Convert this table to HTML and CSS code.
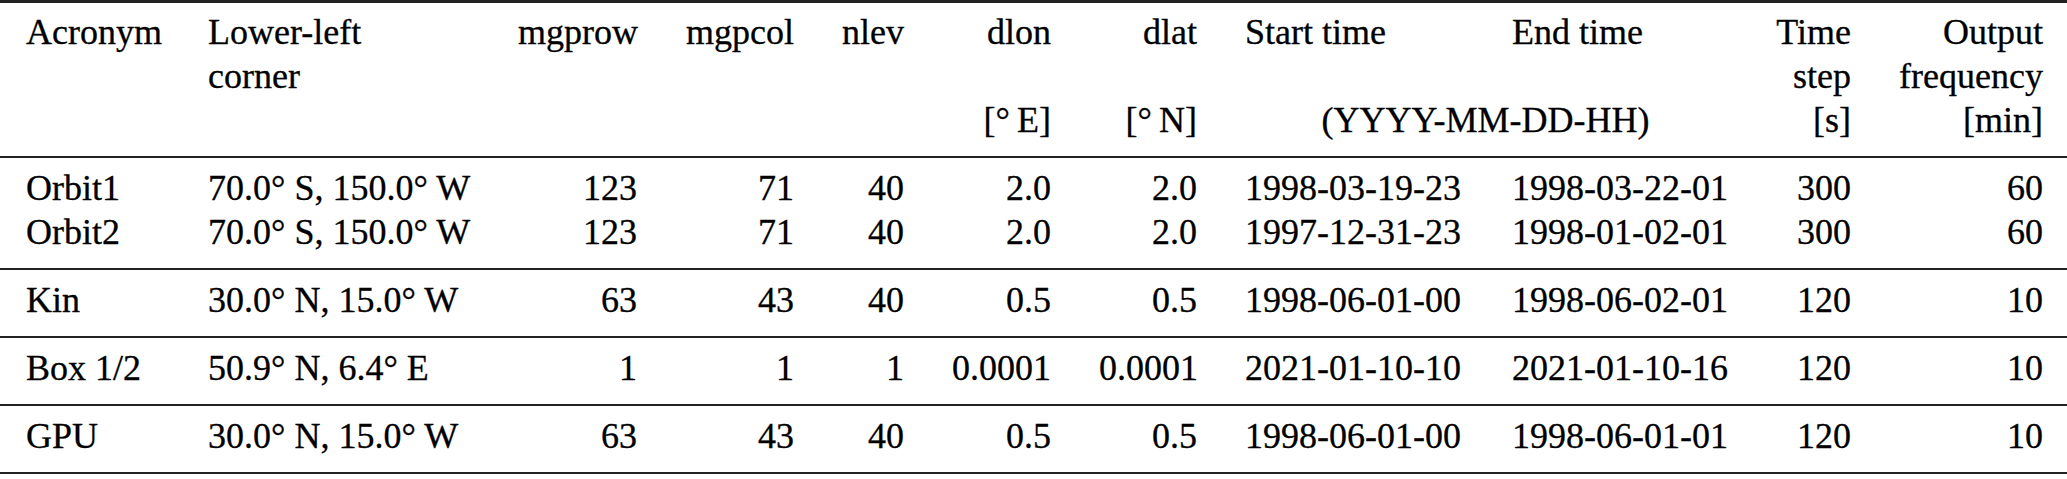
FILE: index.html
```html
<!DOCTYPE html>
<html lang="en">
<head>
  <meta charset="UTF-8">
  <title>Simulation setups</title>
  <link rel="stylesheet" href="styles.css">
</head>
<body>
  <!-- Model domains and run periods -->
  <table class="runs">
    <colgroup>
      <col class="w-acr">
      <col class="w-corner">
      <col class="w-row">
      <col class="w-col">
      <col class="w-lev">
      <col class="w-dlon">
      <col class="w-dlat">
      <col class="w-start">
      <col class="w-end">
      <col class="w-step">
      <col class="w-freq">
    </colgroup>
    <thead>
      <tr class="head-top">
        <th class="l">Acronym</th>
        <th class="l">Lower-left</th>
        <th class="r">mgprow</th>
        <th class="r">mgpcol</th>
        <th class="r">nlev</th>
        <th class="r">dlon</th>
        <th class="r">dlat</th>
        <th class="l">Start time</th>
        <th class="l">End time</th>
        <th class="r">Time</th>
        <th class="r">Output</th>
      </tr>
      <tr>
        <th></th>
        <th class="l">corner</th>
        <th></th>
        <th></th>
        <th></th>
        <th></th>
        <th></th>
        <th></th>
        <th></th>
        <th class="r">step</th>
        <th class="r">frequency</th>
      </tr>
      <tr class="head-units">
        <th></th>
        <th></th>
        <th></th>
        <th></th>
        <th></th>
        <th class="r">[°&#8201;E]</th>
        <th class="r">[°&#8201;N]</th>
        <th class="c" colspan="2">(YYYY-MM-DD-HH)</th>
        <th class="r">[s]</th>
        <th class="r">[min]</th>
      </tr>
    </thead>
    <tbody class="first-group">
      <tr>
        <td class="l">Orbit1</td>
        <td class="l">70.0° S, 150.0° W</td>
        <td class="r">123</td>
        <td class="r">71</td>
        <td class="r">40</td>
        <td class="r">2.0</td>
        <td class="r">2.0</td>
        <td class="l">1998-03-19-23</td>
        <td class="l">1998-03-22-01</td>
        <td class="r">300</td>
        <td class="r">60</td>
      </tr>
      <tr>
        <td class="l">Orbit2</td>
        <td class="l">70.0° S, 150.0° W</td>
        <td class="r">123</td>
        <td class="r">71</td>
        <td class="r">40</td>
        <td class="r">2.0</td>
        <td class="r">2.0</td>
        <td class="l">1997-12-31-23</td>
        <td class="l">1998-01-02-01</td>
        <td class="r">300</td>
        <td class="r">60</td>
      </tr>
    </tbody>
    <tbody>
      <tr>
        <td class="l">Kin</td>
        <td class="l">30.0° N, 15.0° W</td>
        <td class="r">63</td>
        <td class="r">43</td>
        <td class="r">40</td>
        <td class="r">0.5</td>
        <td class="r">0.5</td>
        <td class="l">1998-06-01-00</td>
        <td class="l">1998-06-02-01</td>
        <td class="r">120</td>
        <td class="r">10</td>
      </tr>
    </tbody>
    <tbody>
      <tr>
        <td class="l">Box 1/2</td>
        <td class="l">50.9° N, 6.4° E</td>
        <td class="r">1</td>
        <td class="r">1</td>
        <td class="r">1</td>
        <td class="r">0.0001</td>
        <td class="r">0.0001</td>
        <td class="l">2021-01-10-10</td>
        <td class="l">2021-01-10-16</td>
        <td class="r">120</td>
        <td class="r">10</td>
      </tr>
    </tbody>
    <tbody class="last-group">
      <tr>
        <td class="l">GPU</td>
        <td class="l">30.0° N, 15.0° W</td>
        <td class="r">63</td>
        <td class="r">43</td>
        <td class="r">40</td>
        <td class="r">0.5</td>
        <td class="r">0.5</td>
        <td class="l">1998-06-01-00</td>
        <td class="l">1998-06-01-01</td>
        <td class="r">120</td>
        <td class="r">10</td>
      </tr>
    </tbody>
  </table>
</body>
</html>
```

FILE: styles.css
```css
body {
    margin: 0;
    background: #ffffff;
    color: #000000;
    font-family: 'Liberation Serif', 'DejaVu Serif', serif;
    font-size: 36px;
}

/* table */
.runs {
    width: 2067px;
    table-layout: fixed;
    border-collapse: separate;
    border-spacing: 0;
    -webkit-text-stroke: 0.3px #000;
}

.runs th,
.runs td {
    padding: 0 24px;
    line-height: 44px;
    font-weight: normal;
    white-space: nowrap;
    box-sizing: border-box;
}

.runs th:first-child,
.runs td:first-child {
    padding-left: 26px;
}

.l { text-align: left; }
.r { text-align: right; }
.c { text-align: center; }

/* column widths */
.w-acr { width: 184px; }
.w-corner { width: 310px; }
.w-row { width: 167px; }
.w-col { width: 157px; }
.w-lev { width: 110px; }
.w-dlon { width: 147px; }
.w-dlat { width: 146px; }
.w-start { width: 267px; }
.w-end { width: 262px; }
.w-step { width: 125px; }
.w-freq { width: 192px; }

/* rules */
.head-top th {
    border-top: 3px solid #222;
    padding-top: 7px;
}

.head-units th {
    border-bottom: 2px solid #222;
    padding-bottom: 14px;
}

.runs tbody tr:first-child td {
    padding-top: 8px;
}

.runs tbody tr:last-child td {
    border-bottom: 2px solid #222;
    padding-bottom: 14px;
}

.first-group tr:first-child td {
    padding-top: 10px;
}

.last-group tr:last-child td {
    border-bottom-width: 3px;
    padding-bottom: 15px;
}
```
